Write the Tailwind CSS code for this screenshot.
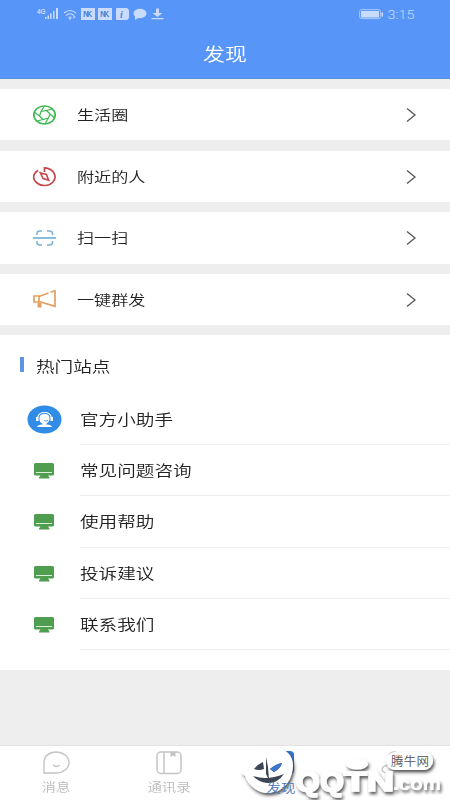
<!DOCTYPE html>
<html lang="zh-CN"><head><meta charset="utf-8"><title>发现</title>
<script src="https://cdn.jsdelivr.net/npm/@tailwindcss/browser@4"></script></head>
<body class="w-[450px] h-[800px] overflow-hidden bg-[#eeeeee] text-[#222] font-['Noto_Sans_CJK_SC',sans-serif] font-[350]">
<svg class="hidden">
<symbol id="chev" viewBox="0 0 10 16"><path d="M1 1.5 9 8 1 14.5" fill="none" stroke="#555" stroke-width="1.3"/></symbol>
<symbol id="mon" viewBox="0 0 20 16"><path d="M1.500 0h17Q20 0 20 1.500v9.500Q20 12.500 18.500 12.500H14l1.500 2V15.500H5V14.500l1.500-2H1.500Q0 12.500 0 11V1.500Q0 0 1.500 0z" fill="#4f9d4f"/><path d="M2 9.500h16" stroke="#d8f0d8" stroke-width="1"/></symbol>
</svg>
<div class="flex h-full flex-col overflow-hidden">
<header class="h-[79px] shrink-0 bg-[#5796f8] border-b border-[#5b8fdc] flex flex-col">
 <div class="h-7 flex justify-between pl-9 pr-[34px]">
  <svg class="w-[130px] h-7" viewBox="36 0 130 28" fill="#c9dcfd">
   <text x="37" y="13.500" font-size="6.500" font-family="Liberation Sans" font-weight="700">4G</text>
   <path d="M45 17h1.500v2H45zM47.500 15.500H49V19h-1.500zM50 13.500h1.500V19H50zM53 11h1.500v8H53zM56 8h2v11h-2z"/>
   <g fill="none" stroke="#c9dcfd" stroke-width="1.200"><path d="M64 13q6-5 12 0M66 15.500q4-3.500 8 0M68.500 17.500q1.500-1 3 0"/></g><path d="M73.500 15l2 2-2 2zM69 18h2v1.500h-2z"/>
   <path d="M81 8h14v12H81zM98 8h14v12H98z"/>
   <path d="M117 8h7v12h-7q-1 0-1-1V9q0-1 1-1zM123 8h4q2 1 2 3v6q0 2-2 3h-4z"/>
   <g fill="#5187d8" font-family="Liberation Sans" font-weight="700" font-size="8.500"><text x="83" y="17" textLength="9.500">NK</text><text x="100" y="17" textLength="9.500">NK</text><text x="120" y="18" font-size="10" font-style="italic" font-family="Liberation Serif">i</text></g>
   <ellipse cx="140" cy="13.500" rx="6.500" ry="4.700"/><path d="M135 16v4l5-3z"/>
   <path d="M156 8.500h3V13h3.500l-5 4-5-4h3.500zM151.500 18h12v1.200h-12z"/>
  </svg>
  <div class="flex pt-2 text-[#c9dcfd]">
   <svg class="mt-[1px] w-6 h-[11px]" viewBox="0 0 24 11"><rect x=".6" y=".6" width="21" height="9" rx="2" fill="none" stroke="#a9c8fc"/><rect x="2" y="2" width="18" height="6.500" fill="#c9dcfd"/><path d="M22.500 3.500h1.500v4h-1.500z" fill="#c9dcfd"/></svg>
   <svg class="ml-1 h-3 w-[29px]" viewBox="0 0 29 12"><text x="0.500" y="10.500" font-family="Roboto" font-size="12" textLength="27" lengthAdjust="spacingAndGlyphs" fill="#c9dcfd">3:15</text></svg>
  </div>
 </div>
 <h1 class="flex justify-center text-white text-[18px] leading-[51px]"><span class="scale-x-[1.22]">发现</span></h1>
</header>
<main class="flex-1 text-[14px]">
 <section class="mt-[10px] h-[51px] bg-white flex items-center pl-[33px] pr-[34px]"><svg class="w-[23px] h-5" viewBox="0 0 23 20" fill="none" stroke="#3fb851"><ellipse cx="11.500" cy="10" rx="10.700" ry="9" stroke-width="1.700"/><path d="M8 6.500 13.500 5.500 17 9 15.500 13 10 14.500 6.500 11zM8 6.500 11.500 1M13.500 5.500 19 4M17 9l4.500 4M15.500 13 12 19M10 14.500 4 16M6.500 11 1 7" stroke-width="1.200"/></svg><span class="ml-[21px] origin-left scale-x-[1.22]">生活圈</span><svg class="ml-auto w-[10px] h-4"><use href="#chev"/></svg></section>
 <section class="mt-[11px] h-[51px] bg-white flex items-center pl-[33px] pr-[34px]"><svg class="w-[23px] h-5" viewBox="0 0 23 20" fill="none" stroke="#c4474a" stroke-width="1.700"><path d="M5 3.300C-1 7.500-.5 12.500 4 16 8 19.500 16 19.500 20 15 24.500 9.500 21 1.500 11.500.9V5"/><path d="M7.500 6 13.500 7.500 15.500 13 10 11.500zM6.500 5l2 2M14.500 12l2 2" stroke-width="1.600"/></svg><span class="ml-[21px] origin-left scale-x-[1.22]">附近的人</span><svg class="ml-auto w-[10px] h-4"><use href="#chev"/></svg></section>
 <section class="mt-[10px] h-[52px] bg-white flex items-center pl-[33px] pr-[34px]"><svg class="w-[23px] h-5" viewBox="0 0 23 20" fill="none" stroke="#7eb5d5" stroke-width="1.500"><path d="M0 10h23" stroke-width="1.800"/><path d="M4 7V5.500Q4 3 7 3h2M14 3h2q3.500 0 3.500 2.500V7M4 13v1.500Q4 17 7 17h2M14 17h2q3.500 0 3.500-2.500V13"/></svg><span class="-mt-px ml-[21px] origin-left scale-x-[1.22]">扫一扫</span><svg class="ml-auto w-[10px] h-4"><use href="#chev"/></svg></section>
 <section class="mt-[10px] h-[51px] bg-white flex items-center pl-[33px] pr-[34px]"><svg class="w-[23px] h-5" viewBox="0 0 23 20" fill="none" stroke="#e39f62" stroke-width="1.700"><path d="M1 6h5v6H1zM6 6.500 15.500 3M17.500 2.300l4.500-1.500v15.500L6 11.500"/><path d="M4.500 13h4v4.500h-4z" fill="#e39f62" stroke="none"/></svg><span class="ml-[21px] origin-left scale-x-[1.22]">一键群发</span><svg class="ml-auto w-[10px] h-4"><use href="#chev"/></svg></section>
 <section class="mt-[10px] h-[335px] bg-white text-[15px]">
  <div class="h-[59px] pt-[4px] flex items-center pl-5"><i class="-mt-[4px] w-1 h-[15px] bg-[#5e94e4]"></i><h2 class="ml-[12px] origin-left scale-x-[1.24]">热门站点</h2></div>
  <div class="h-[51px] flex"><div class="w-20 pl-[27px] flex items-center"><svg class="w-[35px] h-[29px]" viewBox="0 0 35 29"><ellipse cx="17.500" cy="14.500" rx="17" ry="14" fill="#318ce7"/><path d="M10.500 14v-1q1-5.500 7-5.500t7 5.500v1" fill="none" stroke="#fff" stroke-width="1.200"/><path d="M9 12h2.500v4H9zM23.500 12H26v4h-2.500zM12.500 13q0-4 5-4t5 4v1.500q-1 3.500-3 4v1q5 0 5.500 2.500H10q.5-2.500 5.500-2.500v-1q-3-1-3-4z" fill="#fff"/><path d="M17 15.500q2 1.500 4-.5" fill="none" stroke="#318ce7" stroke-width=".8"/></svg></div><div class="flex-1 flex items-center border-b border-[#ededed]"><span class="origin-left scale-x-[1.24]">官方小助手</span></div></div>
  <div class="h-[51px] flex"><div class="w-20 pl-[34px] flex items-center"><svg class="w-5 h-4"><use href="#mon"/></svg></div><div class="flex-1 flex items-center border-b border-[#ededed]"><span class="origin-left scale-x-[1.24]">常见问题咨询</span></div></div>
  <div class="h-[52px] flex"><div class="w-20 pl-[34px] flex items-center"><svg class="w-5 h-4"><use href="#mon"/></svg></div><div class="flex-1 flex items-center border-b border-[#ededed]"><span class="origin-left scale-x-[1.24]">使用帮助</span></div></div>
  <div class="h-[51px] flex"><div class="w-20 pl-[34px] flex items-center"><svg class="w-5 h-4"><use href="#mon"/></svg></div><div class="flex-1 flex items-center border-b border-[#ededed]"><span class="origin-left scale-x-[1.24]">投诉建议</span></div></div>
  <div class="h-[51px] flex"><div class="w-20 pl-[34px] flex items-center"><svg class="w-5 h-4"><use href="#mon"/></svg></div><div class="flex-1 flex items-center border-b border-[#ededed]"><span class="origin-left scale-x-[1.24]">联系我们</span></div></div>
 </section>
</main>
<nav class="relative h-[55px] shrink-0 bg-white border-t border-[#e2e2e2] grid grid-cols-4 text-[12px] leading-[16px] text-[#bbb]">
 <div class="flex flex-col items-center pt-[5px]"><svg class="w-7 h-6" viewBox="0 0 28 24" fill="none" stroke="#c4c4c4" stroke-width="1.400"><path d="M2 22V12C2 5 7 1 14 1s13 4.500 13 10.500S21 22 14 22z"/><path d="M11 14q3.500 3 6.500 0"/></svg><span class="mt-[4px] scale-x-[1.2]">消息</span></div>
 <div class="flex flex-col items-center pt-[5px]"><svg class="w-[26px] h-6" viewBox="0 0 26 24" fill="none" stroke="#c4c4c4" stroke-width="1.500"><rect x="1" y="1" width="24" height="21.500" rx="4"/><path d="M8 1v21"/><path d="M14.500 1h5v5L17 4.500 14.500 6z" fill="#c4c4c4" stroke="none"/></svg><span class="mt-[4px] scale-x-[1.2]">通讯录</span></div>
 <div class="flex flex-col items-center pt-[5px] text-[#3f6fae]"><svg class="w-7 h-6" viewBox="0 0 28 24"><rect x="1" width="26" height="23" rx="4" fill="#3777cf"/></svg></div>
 <div class="flex flex-col items-center pt-[5px]"><svg class="w-7 h-6" viewBox="0 0 28 24" fill="none" stroke="#c4c4c4" stroke-width="1.400"><circle cx="14" cy="7" r="6"/><path d="M11 14q-9 0-9 5 1 3 6 3"/></svg></div>
 <svg class="absolute left-[238px] top-[-4px] w-[212px] h-[58px]" viewBox="238 742 212 58">
  <defs><filter id="shadow" x="-20%" y="-20%" width="140%" height="150%"><feDropShadow dx="1.500" dy="2.500" stdDeviation="1.500" flood-color="#222" flood-opacity=".75"/></filter></defs>
  <g fill="#fff" filter="url(#shadow)">
   <path d="M241 772q4-2 7 0 3-14 17-22 15-6 24 4 6 7 3 19-3 12-14 18-13 5-23-2-8-6-10-13z"/>
   <g font-family="Liberation Sans" font-weight="700" font-size="27" stroke="#fff" stroke-width="1.600"><text x="296" y="791" textLength="48" lengthAdjust="spacingAndGlyphs">QQ</text><text x="344" y="791" textLength="50" lengthAdjust="spacingAndGlyphs">TN</text></g>
   <ellipse cx="357" cy="764" rx="11" ry="5.500"/>
   <rect x="386" y="752" width="47" height="18" rx="9"/>
   <text x="393" y="790" font-family="Liberation Sans" font-weight="700" font-size="19" textLength="48" lengthAdjust="spacingAndGlyphs">.com</text>
  </g>
  <path d="M254 769q4-5 9-7l1 7q-5 2-10 0zM266 757l2 10 1 13-3-6zM270 769q6-5 12-6-2 6-8 9zM253 776q14 5 31-2-7 10-17 9-9-1-14-7z" fill="#3d4654"/>
  <path d="M270 769q6-5 12-6-2 6-8 9z" fill="#3777cf"/>
  <text x="266.500" y="792.500" font-size="12.500" textLength="29" lengthAdjust="spacingAndGlyphs" fill="#4c79b6" font-family="Noto Sans CJK SC">发现</text>
  <text x="391" y="766" font-size="12.500" fill="#555" textLength="38" font-family="Noto Sans CJK SC">腾牛网</text>
 </svg>
</nav>
</div>
</body></html>
